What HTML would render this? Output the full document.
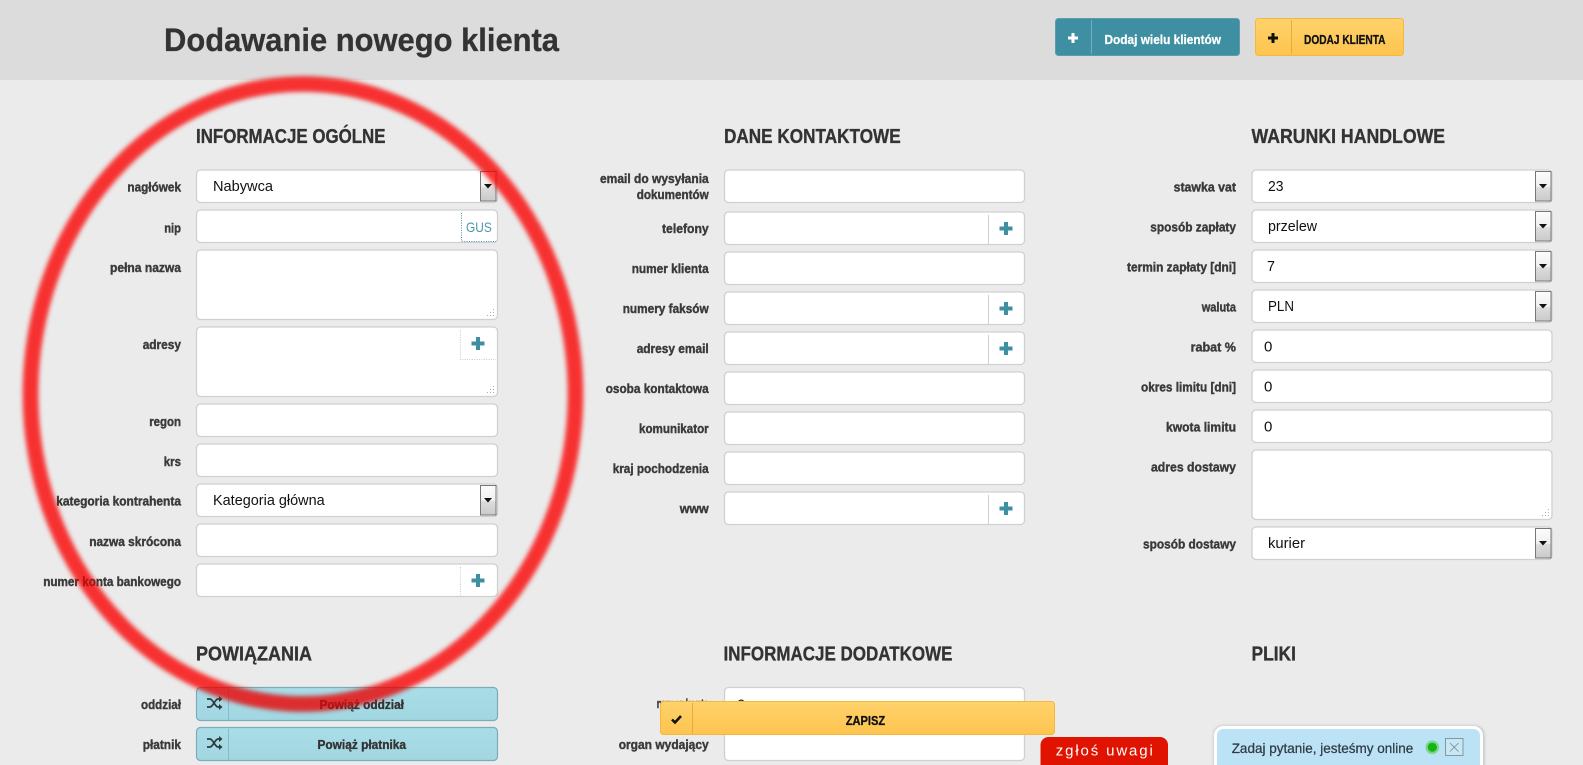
<!DOCTYPE html>
<html lang="pl">
<head>
<meta charset="utf-8">
<title>Dodawanie nowego klienta</title>
<style>
html,body{margin:0;padding:0;width:1583px;height:765px;overflow:hidden;background:#ebebeb}
svg{display:block;position:absolute;left:0;top:0}
text{font-family:"Liberation Sans Narrow","Liberation Sans",sans-serif;white-space:pre}
.h{font-size:20px;font-weight:700;fill:#333;stroke:#333;stroke-width:.35}
.l{font-size:13px;font-weight:700;fill:#3a3a3a;text-anchor:end;stroke:#3a3a3a;stroke-width:.4}
.v{font-family:"Liberation Sans",sans-serif;font-size:15px;fill:#111}
.i{fill:#fff;stroke:#d0d0d0;stroke-width:1.3}
.p{fill:#3f8fa3}
.d{stroke:#c8c8c8;stroke-width:1;stroke-dasharray:1 1.4;fill:none}
.s{stroke:#cfcfcf;stroke-width:1;fill:none}
.a{fill:url(#ga);stroke:#777;stroke-width:1}
.g{fill:#a9a9a9}
.bb{fill:url(#gb);stroke:#78aebb;stroke-width:1.2}
.m{mix-blend-mode:multiply}
</style>
</head>
<body>
<svg width="1583" height="765" viewBox="0 0 1583 765" xmlns="http://www.w3.org/2000/svg">
<defs>
<linearGradient id="ga" x1="0" y1="0" x2="0" y2="1"><stop offset="0" stop-color="#fdfdfd"/><stop offset=".5" stop-color="#f0f0f0"/><stop offset=".55" stop-color="#dcdcdc"/><stop offset="1" stop-color="#cacaca"/></linearGradient>
<linearGradient id="gb" x1="0" y1="0" x2="0" y2="1"><stop offset="0" stop-color="#a9dde8"/><stop offset="1" stop-color="#a2d6e1"/></linearGradient>
<linearGradient id="gy" x1="0" y1="0" x2="0" y2="1"><stop offset="0" stop-color="#ffd26b"/><stop offset="1" stop-color="#fec44f"/></linearGradient>
<filter id="bl" x="-5%" y="-5%" width="110%" height="110%"><feGaussianBlur stdDeviation="2.4"/></filter>
<filter id="sh" x="-5%" y="-30%" width="110%" height="160%"><feGaussianBlur stdDeviation="1.5"/></filter>
</defs>

<!-- header -->
<rect x="0" y="0" width="1583" height="80" fill="#dcdcdc"/>
<text x="164" y="51" font-size="32" font-weight="700" fill="#333" stroke="#333" stroke-width=".3" textLength="395" lengthAdjust="spacingAndGlyphs">Dodawanie nowego klienta</text>

<rect x="1055.5" y="18.5" width="184" height="37" rx="3" fill="#3f8fa3" stroke="#5d9dad"/>
<rect x="1091" y="20" width="1" height="34" fill="#75adbb"/>
<path d="M1071.5 33h3v3.500h3.500v3h-3.500v3.500h-3v-3.500h-3.500v-3h3.500z" fill="#fff"/>
<text x="1104.500" y="44" font-size="13" font-weight="700" fill="#fff" stroke="#fff" stroke-width=".25" textLength="116.500" lengthAdjust="spacingAndGlyphs">Dodaj wielu klientów</text>

<rect x="1255.500" y="18.500" width="148" height="37" rx="3" fill="url(#gy)" stroke="#f6b83a"/>
<rect x="1291" y="20" width="1" height="34" fill="#e6ad3c"/>
<path d="M1271.500 33h3v3.500h3.500v3h-3.500v3.500h-3v-3.500h-3.500v-3h3.500z" fill="#111"/>
<text x="1304" y="44" font-size="13" font-weight="700" fill="#111" stroke="#111" stroke-width=".3" textLength="81.500" lengthAdjust="spacingAndGlyphs">DODAJ KLIENTA</text>

<!-- headings -->
<text class="h" x="196" y="143" textLength="189.500" lengthAdjust="spacingAndGlyphs">INFORMACJE OGÓLNE</text>
<text class="h" x="724" y="143" textLength="176.700" lengthAdjust="spacingAndGlyphs">DANE KONTAKTOWE</text>
<text class="h" x="1251.500" y="143" textLength="193.600" lengthAdjust="spacingAndGlyphs">WARUNKI HANDLOWE</text>
<text class="h" x="196" y="660.500" textLength="116" lengthAdjust="spacingAndGlyphs">POWIĄZANIA</text>
<text class="h" x="723.500" y="660.500" textLength="229" lengthAdjust="spacingAndGlyphs">INFORMACJE DODATKOWE</text>
<text class="h" x="1251.500" y="660.500" textLength="44.400" lengthAdjust="spacingAndGlyphs">PLIKI</text>

<!-- column 1 -->
<text class="l" x="181" y="191.500" textLength="53.600" lengthAdjust="spacingAndGlyphs">nagłówek</text>
<rect class="i" x="196.500" y="170" width="301" height="32.500" rx="4"/>
<rect class="a" x="480.500" y="171.500" width="15.500" height="29.500"/>
<path d="M484 184h8l-4 4.500z" fill="#111"/>
<text class="v" x="213" y="191" textLength="60" lengthAdjust="spacingAndGlyphs">Nabywca</text>

<text class="l" x="181" y="232.500" textLength="16.800" lengthAdjust="spacingAndGlyphs">nip</text>
<rect class="i" x="196.500" y="210" width="301" height="32.500" rx="4"/>
<path d="M461.500 213V241.500H496" fill="none" stroke="#4a8ea0" stroke-width="1" stroke-dasharray="1 1.400"/>
<text x="466" y="232" font-size="14" fill="#4a97ab" textLength="25.800" lengthAdjust="spacingAndGlyphs">GUS</text>

<text class="l" x="181" y="272" textLength="71" lengthAdjust="spacingAndGlyphs">pełna nazwa</text>
<rect class="i" x="196.500" y="250" width="301" height="69.500" rx="4"/>
<path class="g" d="M493 309h1v1h-1zM493 312h1v1h-1zM490 312h1v1h-1zM493 315h1v1h-1zM490 315h1v1h-1zM487 315h1v1h-1z"/>

<text class="l" x="181" y="349" textLength="38.300" lengthAdjust="spacingAndGlyphs">adresy</text>
<rect class="i" x="196.500" y="327" width="301" height="69.500" rx="4"/>
<path class="d" d="M460.500 330V359.500H496"/>
<path class="p" d="M476 337h4v4.500h4.500v4h-4.500v4.500h-4v-4.500h-4.500v-4h4.500z"/>
<path class="g" d="M493 386h1v1h-1zM493 389h1v1h-1zM490 389h1v1h-1zM493 392h1v1h-1zM490 392h1v1h-1zM487 392h1v1h-1z"/>

<text class="l" x="181" y="426" textLength="31.800" lengthAdjust="spacingAndGlyphs">regon</text>
<rect class="i" x="196.500" y="404" width="301" height="32.500" rx="4"/>
<text class="l" x="181" y="466" textLength="17.200" lengthAdjust="spacingAndGlyphs">krs</text>
<rect class="i" x="196.500" y="444" width="301" height="32.500" rx="4"/>

<text class="l" x="181" y="505.500" textLength="124.800" lengthAdjust="spacingAndGlyphs">kategoria kontrahenta</text>
<rect class="i" x="196.500" y="484" width="301" height="32.500" rx="4"/>
<rect class="a" x="480.500" y="485.500" width="15.500" height="29.500"/>
<path d="M484 498h8l-4 4.500z" fill="#111"/>
<text class="v" x="213" y="505" textLength="111.700" lengthAdjust="spacingAndGlyphs">Kategoria główna</text>

<text class="l" x="181" y="546" textLength="91.800" lengthAdjust="spacingAndGlyphs">nazwa skrócona</text>
<rect class="i" x="196.500" y="524" width="301" height="32.500" rx="4"/>

<text class="l" x="181" y="586" textLength="137.800" lengthAdjust="spacingAndGlyphs">numer konta bankowego</text>
<rect class="i" x="196.500" y="564" width="301" height="32.500" rx="4"/>
<path class="d" d="M460.500 567V596"/>
<path class="p" d="M476 574h4v4.500h4.500v4h-4.500v4.500h-4v-4.500h-4.500v-4h4.500z"/>

<text class="l" x="181" y="709" textLength="40" lengthAdjust="spacingAndGlyphs">oddział</text>
<rect class="bb" x="196.500" y="687.500" width="301" height="33" rx="4"/>
<rect x="228" y="689" width="1" height="31" fill="#86bcc8"/>
<path d="M207 699h3c3 0 5 8 8 8h2M207 707h3c3 0 5-8 8-8h2" fill="none" stroke="#2d3a3d" stroke-width="1.700"/>
<path d="M219 696l3.500 3-3.500 3zM219 704l3.500 3-3.500 3z" fill="#2d3a3d"/>
<text x="319.500" y="709" font-size="13" font-weight="700" fill="#333" stroke="#333" stroke-width=".35" textLength="84.500" lengthAdjust="spacingAndGlyphs">Powiąż oddział</text>

<text class="l" x="181" y="749" textLength="38.300" lengthAdjust="spacingAndGlyphs">płatnik</text>
<rect class="bb" x="196.500" y="727.500" width="301" height="33" rx="4"/>
<rect x="228" y="729" width="1" height="31" fill="#86bcc8"/>
<path d="M207 739h3c3 0 5 8 8 8h2M207 747h3c3 0 5-8 8-8h2" fill="none" stroke="#2d3a3d" stroke-width="1.700"/>
<path d="M219 736l3.500 3-3.500 3zM219 744l3.500 3-3.500 3z" fill="#2d3a3d"/>
<text x="317.500" y="749" font-size="13" font-weight="700" fill="#333" stroke="#333" stroke-width=".35" textLength="88.500" lengthAdjust="spacingAndGlyphs">Powiąż płatnika</text>

<!-- column 2 -->
<text class="l" x="708.700" y="183" textLength="108.700" lengthAdjust="spacingAndGlyphs">email do wysyłania</text>
<text class="l" x="708.700" y="199" textLength="72" lengthAdjust="spacingAndGlyphs">dokumentów</text>
<rect class="i" x="724.500" y="170" width="300" height="32.500" rx="4"/>

<text class="l" x="708.700" y="233" textLength="46.700" lengthAdjust="spacingAndGlyphs">telefony</text>
<rect class="i" x="724.500" y="212" width="300" height="32.500" rx="4"/>
<path class="s" d="M988.500 215V244"/>
<path class="p" d="M1004 222h4v4.500h4.500v4h-4.500v4.500h-4v-4.500h-4.500v-4h4.500z"/>

<text class="l" x="708.700" y="273" textLength="77" lengthAdjust="spacingAndGlyphs">numer klienta</text>
<rect class="i" x="724.500" y="252" width="300" height="32.500" rx="4"/>

<text class="l" x="708.700" y="313" textLength="86" lengthAdjust="spacingAndGlyphs">numery faksów</text>
<rect class="i" x="724.500" y="292" width="300" height="32.500" rx="4"/>
<path class="s" d="M988.500 295V324"/>
<path class="p" d="M1004 302h4v4.500h4.500v4h-4.500v4.500h-4v-4.500h-4.500v-4h4.500z"/>

<text class="l" x="708.700" y="353" textLength="72" lengthAdjust="spacingAndGlyphs">adresy email</text>
<rect class="i" x="724.500" y="332" width="300" height="32.500" rx="4"/>
<path class="s" d="M988.500 335V364"/>
<path class="p" d="M1004 342h4v4.500h4.500v4h-4.500v4.500h-4v-4.500h-4.500v-4h4.500z"/>

<text class="l" x="708.700" y="393" textLength="103" lengthAdjust="spacingAndGlyphs">osoba kontaktowa</text>
<rect class="i" x="724.500" y="372" width="300" height="32.500" rx="4"/>
<text class="l" x="708.700" y="433" textLength="69.700" lengthAdjust="spacingAndGlyphs">komunikator</text>
<rect class="i" x="724.500" y="412" width="300" height="32.500" rx="4"/>
<text class="l" x="708.700" y="473" textLength="96" lengthAdjust="spacingAndGlyphs">kraj pochodzenia</text>
<rect class="i" x="724.500" y="452" width="300" height="32.500" rx="4"/>

<text class="l" x="708.700" y="513" textLength="29" lengthAdjust="spacingAndGlyphs">www</text>
<rect class="i" x="724.500" y="492" width="300" height="32.500" rx="4"/>
<path class="s" d="M988.500 495V524"/>
<path class="p" d="M1004 502h4v4.500h4.500v4h-4.500v4.500h-4v-4.500h-4.500v-4h4.500z"/>

<text class="l" x="708.700" y="708" textLength="52" lengthAdjust="spacingAndGlyphs">numer konta</text>
<rect class="i" x="724.500" y="687.500" width="300" height="32.500" rx="4"/>
<text class="v" x="737" y="709.500">0</text>
<text class="l" x="708.700" y="749" textLength="90" lengthAdjust="spacingAndGlyphs">organ wydający</text>
<rect class="i" x="724.500" y="727.500" width="300" height="33" rx="4"/>

<!-- column 3 -->
<text class="l" x="1236" y="191.500" textLength="62.400" lengthAdjust="spacingAndGlyphs">stawka vat</text>
<rect class="i" x="1252" y="170" width="300" height="32.500" rx="4"/>
<rect class="a" x="1535.500" y="171.500" width="15.500" height="29.500"/>
<path d="M1539 184h8l-4 4.500z" fill="#111"/>
<text class="v" x="1268" y="191" textLength="15.500" lengthAdjust="spacingAndGlyphs">23</text>

<text class="l" x="1236" y="231.500" textLength="85.700" lengthAdjust="spacingAndGlyphs">sposób zapłaty</text>
<rect class="i" x="1252" y="210" width="300" height="32.500" rx="4"/>
<rect class="a" x="1535.500" y="211.500" width="15.500" height="29.500"/>
<path d="M1539 224h8l-4 4.500z" fill="#111"/>
<text class="v" x="1268" y="231" textLength="49" lengthAdjust="spacingAndGlyphs">przelew</text>

<text class="l" x="1236" y="271.500" textLength="109" lengthAdjust="spacingAndGlyphs">termin zapłaty [dni]</text>
<rect class="i" x="1252" y="250" width="300" height="32.500" rx="4"/>
<rect class="a" x="1535.500" y="251.500" width="15.500" height="29.500"/>
<path d="M1539 264h8l-4 4.500z" fill="#111"/>
<text class="v" x="1267" y="271" textLength="8" lengthAdjust="spacingAndGlyphs">7</text>

<text class="l" x="1236" y="311.500" textLength="34.300" lengthAdjust="spacingAndGlyphs">waluta</text>
<rect class="i" x="1252" y="290" width="300" height="32.500" rx="4"/>
<rect class="a" x="1535.500" y="291.500" width="15.500" height="29.500"/>
<path d="M1539 304h8l-4 4.500z" fill="#111"/>
<text class="v" x="1268" y="311" textLength="26" lengthAdjust="spacingAndGlyphs">PLN</text>

<text class="l" x="1236" y="351.500" textLength="45.400" lengthAdjust="spacingAndGlyphs">rabat %</text>
<rect class="i" x="1252" y="330" width="300" height="32.500" rx="4"/>
<text class="v" x="1264" y="351.500">0</text>
<text class="l" x="1236" y="391.500" textLength="95" lengthAdjust="spacingAndGlyphs">okres limitu [dni]</text>
<rect class="i" x="1252" y="370" width="300" height="32.500" rx="4"/>
<text class="v" x="1264" y="391.500">0</text>
<text class="l" x="1236" y="431.500" textLength="70" lengthAdjust="spacingAndGlyphs">kwota limitu</text>
<rect class="i" x="1252" y="410" width="300" height="32.500" rx="4"/>
<text class="v" x="1264" y="431.500">0</text>

<text class="l" x="1236" y="471.500" textLength="85" lengthAdjust="spacingAndGlyphs">adres dostawy</text>
<rect class="i" x="1252" y="450" width="300" height="69.500" rx="4"/>
<path class="g" d="M1548 509h1v1h-1zM1548 512h1v1h-1zM1545 512h1v1h-1zM1548 515h1v1h-1zM1545 515h1v1h-1zM1542 515h1v1h-1z"/>

<text class="l" x="1236" y="548.500" textLength="93" lengthAdjust="spacingAndGlyphs">sposób dostawy</text>
<rect class="i" x="1252" y="527" width="300" height="32.500" rx="4"/>
<rect class="a" x="1535.500" y="528.500" width="15.500" height="29.500"/>
<path d="M1539 541h8l-4 4.500z" fill="#111"/>
<text class="v" x="1268" y="548" textLength="37" lengthAdjust="spacingAndGlyphs">kurier</text>

<!-- red hand-drawn ellipse -->
<ellipse cx="303" cy="394" rx="272.500" ry="310" fill="none" stroke="#ff2424" stroke-opacity=".62" stroke-width="14.500" filter="url(#bl)"/>
<ellipse class="m" cx="303" cy="394" rx="272.500" ry="310" fill="none" stroke="#ff6c6c" stroke-width="14.500" filter="url(#bl)"/>

<!-- sticky save bar -->
<rect x="660.500" y="701.500" width="394" height="33" rx="3" fill="url(#gy)" stroke="#f6b83a"/>
<rect x="692" y="703" width="1" height="31" fill="#e6ad3c"/>
<path d="M672 719.500l3 3 6-6.500" fill="none" stroke="#111" stroke-width="2.600"/>
<text x="845.700" y="725" font-size="12.500" font-weight="700" fill="#111" stroke="#111" stroke-width=".3" textLength="39.500" lengthAdjust="spacingAndGlyphs">ZAPISZ</text>

<!-- report button -->
<path d="M1040.500 765V745a8 8 0 0 1 8-8H1160a8 8 0 0 1 8 8V765z" fill="#e01300"/>
<text x="1055.800" y="755.500" font-size="15" fill="#fff" textLength="97" lengthAdjust="spacing">zgłoś uwagi</text>

<!-- chat widget -->
<rect x="1214" y="726" width="270" height="50" rx="9" fill="#9a9a9a" opacity=".6" filter="url(#sh)"/>
<rect x="1215.500" y="727.500" width="266" height="50" rx="8" fill="#bbe2f5" stroke="#fff" stroke-width="3"/>
<text x="1231.700" y="753" style="font-family:'Liberation Sans',sans-serif" font-size="14" fill="#2f3a44" stroke="#2f3a44" stroke-width=".25" textLength="181.600" lengthAdjust="spacingAndGlyphs">Zadaj pytanie, jesteśmy online</text>
<circle cx="1432.300" cy="747.300" r="6.800" fill="#7fd58a"/>
<circle cx="1432.300" cy="747.300" r="4.600" fill="#14b514"/>
<rect x="1445.500" y="738.500" width="17.500" height="17" fill="#c9e6f3" stroke="#7d9aa8" stroke-width="1"/>
<path d="M1450 743l8.500 8.500M1458.500 743l-8.500 8.500" stroke="#6f8a96" stroke-width=".8" fill="none"/>
</svg>
</body>
</html>
